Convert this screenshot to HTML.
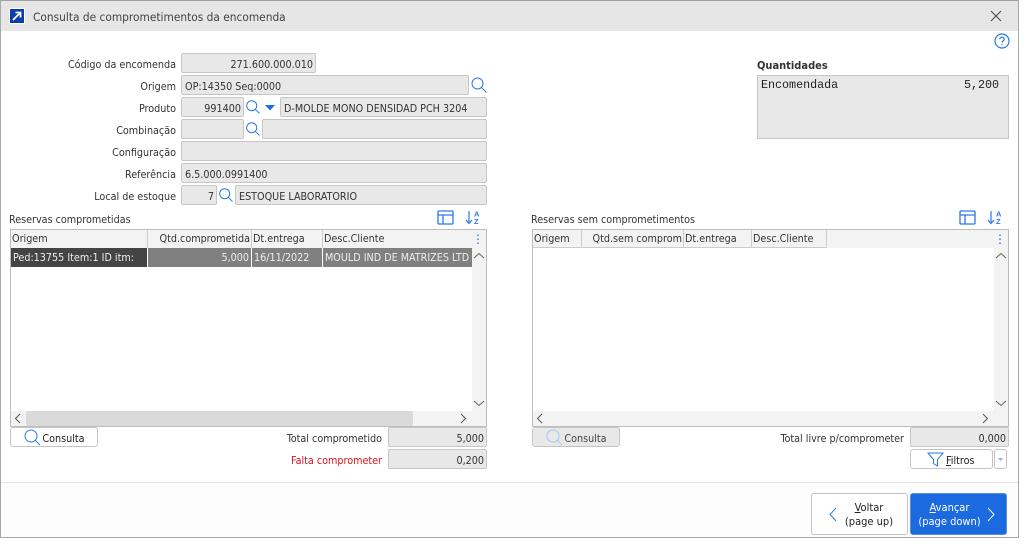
<!DOCTYPE html>
<html><head><meta charset="utf-8">
<style>
html,body{margin:0;padding:0;background:#fff}
body{width:1033px;height:545px;position:relative;overflow:hidden;font-family:"DejaVu Sans Condensed","DejaVu Sans",sans-serif;font-stretch:condensed;font-size:10.7px;color:#333}
.a,.l,.i,.t,.c,.b{position:absolute;box-sizing:border-box;white-space:nowrap}
.l{text-align:right;height:20px;line-height:23px;left:0;width:176px}
.i{background:#e8e8e8;border:1px solid #c6c6c6;border-radius:2px;height:20px;line-height:22px;padding:0 3px;color:#333;overflow:hidden}
.r{text-align:right;padding-right:2px}
.t{line-height:14px}
.c{height:100%;line-height:18px;padding:0 1px;overflow:hidden}
.b{background:#fff;border:1px solid #c4c4c4;border-radius:3px;color:#222;text-align:center}
svg{position:absolute;overflow:visible}
u{text-decoration:underline}
</style></head><body>
<!-- window -->
<div class="a" style="left:0;top:0;width:1019px;height:538px;background:#fdfdfd;border:1px solid #a8a8a8;border-top:1px solid #a0a0a0"></div>
<div class="a" style="left:1px;top:1px;width:1017px;height:30px;background:#e6e6e6"></div>
<div class="a" style="left:1px;top:31px;width:1017px;height:452px;background:#fff"></div>
<div class="a" style="left:1px;top:482px;width:1017px;height:1px;background:#e4e4e4"></div>
<div class="a" style="left:9px;top:8px;width:16px;height:16px;background:#0a3ea8;border:1px solid #fff"></div>
<svg style="left:9px;top:8px" width="16" height="16"><path d="M4 12 L11 5 M6.5 4.5 H11.5 V9.5" fill="none" stroke="#fff" stroke-width="1.8"/></svg>
<div class="t" style="left:33px;top:10px;font-size:11.8px;color:#444">Consulta de comprometimentos da encomenda</div>
<svg style="left:990px;top:10px" width="12" height="12"><path d="M1 1 L11 11 M11 1 L1 11" stroke="#444" stroke-width="1" fill="none"/></svg>
<svg style="left:994px;top:33px" width="16" height="16"><circle cx="8" cy="8" r="7" fill="none" stroke="#2a7ae4" stroke-width="1.2"/><path d="M5.8 6.3 C5.8 3.6 10.2 3.6 10.2 6.3 C10.2 8 8 7.8 8 9.8 M8 11 V12.3" fill="none" stroke="#2a7ae4" stroke-width="1.2"/></svg>

<!-- form -->
<div class="l" style="top:53px">Código da encomenda</div>
<div class="i r" style="left:181px;top:53px;width:135px">271.600.000.010</div>
<div class="l" style="top:75px">Origem</div>
<div class="i" style="left:181px;top:75px;width:288px">OP:14350 Seq:0000</div>
<svg style="left:471px;top:77px" width="16" height="16"><circle cx="6.5" cy="6.5" r="5.5" fill="none" stroke="#2a7ae4" stroke-width="1"/><path d="M10.5 10.5 L15.5 15.5" stroke="#2a7ae4" stroke-width="1"/></svg>
<div class="l" style="top:97px">Produto</div>
<div class="i r" style="left:181px;top:97px;width:63px">991400</div>
<svg style="left:246px;top:100px" width="14" height="14"><circle cx="5.7" cy="5.7" r="5" fill="none" stroke="#2a7ae4" stroke-width="1"/><path d="M9.3 9.3 L13.5 13.5" stroke="#2a7ae4" stroke-width="1"/></svg>
<svg style="left:265px;top:105px" width="10" height="6"><path d="M0 0 H10 L5 5.5 Z" fill="#1c6ee0"/></svg>
<div class="i" style="left:280px;top:97px;width:207px">D-MOLDE MONO DENSIDAD PCH 3204</div>
<div class="l" style="top:119px">Combinação</div>
<div class="i" style="left:181px;top:119px;width:63px"></div>
<svg style="left:246px;top:122px" width="14" height="14"><circle cx="5.7" cy="5.7" r="5" fill="none" stroke="#2a7ae4" stroke-width="1"/><path d="M9.3 9.3 L13.5 13.5" stroke="#2a7ae4" stroke-width="1"/></svg>
<div class="i" style="left:262px;top:119px;width:225px"></div>
<div class="l" style="top:141px">Configuração</div>
<div class="i" style="left:181px;top:141px;width:306px"></div>
<div class="l" style="top:163px">Referência</div>
<div class="i" style="left:181px;top:163px;width:306px">6.5.000.0991400</div>
<div class="l" style="top:185px">Local de estoque</div>
<div class="i r" style="left:181px;top:185px;width:36px">7</div>
<svg style="left:219px;top:188px" width="14" height="14"><circle cx="5.7" cy="5.7" r="5" fill="none" stroke="#2a7ae4" stroke-width="1"/><path d="M9.3 9.3 L13.5 13.5" stroke="#2a7ae4" stroke-width="1"/></svg>
<div class="i" style="left:235px;top:185px;width:252px">ESTOQUE LABORATORIO</div>

<!-- quantidades -->
<div class="t" style="left:757px;top:59px;font-weight:bold;font-size:11px">Quantidades</div>
<div class="a" style="left:757px;top:75px;width:252px;height:64px;background:#e8e8e8;border:1px solid #c6c6c6"></div>
<div class="t" style="left:761px;top:78px;font-family:'Liberation Mono',monospace;font-stretch:normal;font-size:11.7px;color:#222">Encomendada</div>
<div class="t" style="left:964px;top:78px;font-family:'Liberation Mono',monospace;font-stretch:normal;font-size:11.7px;color:#222">5,200</div>

<!-- left grid -->
<div class="t" style="left:9px;top:213px">Reservas comprometidas</div>
<svg style="left:437px;top:210px" width="17" height="15"><rect x="1" y="1" width="15" height="13" rx="1" fill="none" stroke="#2a7ae4" stroke-width="1.3"/><path d="M1 5 H16 M6 5 V14" stroke="#2a7ae4" stroke-width="1.3" fill="none"/></svg>
<svg style="left:465px;top:210px" width="16" height="16"><path d="M4 1 V13 M1 10 L4 13.5 L7 10" fill="none" stroke="#2a7ae4" stroke-width="1.2"/><text x="9" y="6.5" font-size="7.5" font-weight="bold" fill="#2a7ae4" font-family="Liberation Sans">A</text><text x="9" y="14" font-size="7.5" font-weight="bold" fill="#2a7ae4" font-family="Liberation Sans">Z</text></svg>
<div class="a" style="left:10px;top:229px;width:477px;height:198px;background:#fff;border:1px solid #bdbdbd;overflow:hidden">
 <div class="a" style="left:0;top:0;width:475px;height:18px;background:#f3f3f3"></div>
 <div class="c" style="left:0;width:137px;height:18px;border-right:1px solid #ccc">Origem</div>
 <div class="c r" style="left:137px;width:104px;height:18px;border-right:1px solid #ccc;text-align:right">Qtd.comprometida</div>
 <div class="c" style="left:241px;width:71px;height:18px;border-right:1px solid #ccc">Dt.entrega</div>
 <div class="c" style="left:312px;width:149px;height:18px">Desc.Cliente</div>
 <div class="a" style="left:0;top:18px;width:136px;height:19px;line-height:20px;background:#444;color:#eee;padding-left:2px;overflow:hidden">Ped:13755 Item:1 ID itm:</div>
 <div class="a" style="left:137px;top:18px;width:103px;height:19px;line-height:20px;background:#808080;color:#eee;text-align:right;padding-right:2px">5,000</div>
 <div class="a" style="left:241px;top:18px;width:70px;height:19px;line-height:20px;background:#808080;color:#eee;padding-left:2px">16/11/2022</div>
 <div class="a" style="left:312px;top:18px;width:149px;height:19px;line-height:20px;background:#808080;color:#eee;padding-left:2px;overflow:hidden">MOULD IND DE MATRIZES LTD</div>
 <div class="a" style="left:461px;top:18px;width:14px;height:163px;background:#f3f3f3"></div>
 <div class="a" style="left:0;top:181px;width:475px;height:15px;background:#f3f3f3"></div>
 <div class="a" style="left:15px;top:181px;width:387px;height:15px;background:#dadada;border-radius:2px"></div>
</div>
<svg style="left:471px;top:229px" width="16" height="198"><path d="M8 7.5 V9 M8 11.5 V13 M8 15.5 V17" transform="translate(-1,-2)" stroke="#2a7ae4" stroke-width="1.4"/><path d="M3 29 L8 24.5 L13 29 M3 172 L8 176.5 L13 172" fill="none" stroke="#666" stroke-width="1"/></svg>
<svg style="left:14px;top:412px" width="452" height="14"><path d="M6 2 L1.5 6.5 L6 11 M447 2 L451.5 6.5 L447 11" fill="none" stroke="#555" stroke-width="1"/></svg>
<div class="b" style="left:10px;top:427px;width:88px;height:20px;line-height:21px;padding-left:19px;color:#222">Consulta</div>
<svg style="left:24px;top:429px" width="17" height="17"><circle cx="7" cy="7" r="6" fill="none" stroke="#2a7ae4" stroke-width="1"/><path d="M11.3 11.3 L16 16" stroke="#2a7ae4" stroke-width="1"/></svg>
<div class="l" style="left:200px;width:182px;top:427px">Total comprometido</div>
<div class="i r" style="left:388px;top:427px;width:99px">5,000</div>
<div class="l" style="left:200px;width:182px;top:449px;color:#d8141c">Falta comprometer</div>
<div class="i r" style="left:388px;top:449px;width:99px">0,200</div>

<!-- right grid -->
<div class="t" style="left:531px;top:213px">Reservas sem comprometimentos</div>
<svg style="left:959px;top:210px" width="17" height="15"><rect x="1" y="1" width="15" height="13" rx="1" fill="none" stroke="#2a7ae4" stroke-width="1.3"/><path d="M1 5 H16 M6 5 V14" stroke="#2a7ae4" stroke-width="1.3" fill="none"/></svg>
<svg style="left:987px;top:210px" width="16" height="16"><path d="M4 1 V13 M1 10 L4 13.5 L7 10" fill="none" stroke="#2a7ae4" stroke-width="1.2"/><text x="9" y="6.5" font-size="7.5" font-weight="bold" fill="#2a7ae4" font-family="Liberation Sans">A</text><text x="9" y="14" font-size="7.5" font-weight="bold" fill="#2a7ae4" font-family="Liberation Sans">Z</text></svg>
<div class="a" style="left:532px;top:229px;width:477px;height:198px;background:#fff;border:1px solid #bdbdbd;overflow:hidden">
 <div class="a" style="left:0;top:0;width:475px;height:18px;background:#f3f3f3"></div>
 <div class="c" style="left:0;width:49px;height:18px;border-right:1px solid #ccc;border-bottom:1px solid #ccc">Origem</div>
 <div class="c" style="left:49px;width:102px;height:18px;border-right:1px solid #ccc;border-bottom:1px solid #ccc;text-align:right">Qtd.sem comprom</div>
 <div class="c" style="left:151px;width:68px;height:18px;border-right:1px solid #ccc;border-bottom:1px solid #ccc">Dt.entrega</div>
 <div class="c" style="left:219px;width:75px;height:18px;border-right:1px solid #ccc;border-bottom:1px solid #ccc">Desc.Cliente</div>
 <div class="a" style="left:461px;top:18px;width:14px;height:163px;background:#f3f3f3"></div>
 <div class="a" style="left:0;top:181px;width:475px;height:15px;background:#f3f3f3"></div>
</div>
<svg style="left:993px;top:229px" width="16" height="198"><path d="M8 7.5 V9 M8 11.5 V13 M8 15.5 V17" transform="translate(-1,-2)" stroke="#2a7ae4" stroke-width="1.4"/><path d="M3 29 L8 24.5 L13 29 M3 172 L8 176.5 L13 172" fill="none" stroke="#666" stroke-width="1"/></svg>
<svg style="left:536px;top:412px" width="452" height="14"><path d="M6 2 L1.5 6.5 L6 11 M447 2 L451.5 6.5 L447 11" fill="none" stroke="#555" stroke-width="1"/></svg>
<div class="b" style="left:532px;top:427px;width:88px;height:20px;line-height:21px;padding-left:19px;background:#e8e8e8;color:#444">Consulta</div>
<svg style="left:546px;top:429px" width="17" height="17"><circle cx="7" cy="7" r="6" fill="none" stroke="#a4c6f2" stroke-width="1"/><path d="M11.3 11.3 L16 16" stroke="#a4c6f2" stroke-width="1"/></svg>
<div class="l" style="left:700px;width:204px;top:427px">Total livre p/comprometer</div>
<div class="i r" style="left:910px;top:427px;width:99px">0,000</div>
<div class="b" style="left:910px;top:449px;width:83px;height:20px;line-height:21px;padding-left:35px;text-align:left"><u>F</u>iltros</div>
<svg style="left:927px;top:452px" width="17" height="15"><path d="M1 1 H16 L10.5 7.5 V14 L6.5 11.5 V7.5 Z" fill="none" stroke="#2a7ae4" stroke-width="1"/></svg>
<div class="b" style="left:994px;top:449px;width:13px;height:20px"></div>
<svg style="left:998px;top:458px" width="5" height="3"><path d="M0 0 H5 L2.5 3 Z" fill="#8fb4e6"/></svg>

<!-- nav -->
<div class="b" style="left:811px;top:493px;width:97px;height:42px;line-height:14px;padding:7px 0 0 19px;color:#222;font-size:11px"><u>V</u>oltar<br>(page up)</div>
<svg style="left:829px;top:507px" width="8" height="15"><path d="M7 1 L1 7.5 L7 14" fill="none" stroke="#2a7ae4" stroke-width="1"/></svg>
<div class="b" style="left:910px;top:493px;width:97px;height:42px;line-height:14px;padding:7px 18px 0 0;background:#1b6ae0;border-color:#5a8fd8;color:#fff;font-size:11px"><u>A</u>vançar<br>(page down)</div>
<svg style="left:987px;top:507px" width="8" height="15"><path d="M1 1 L7 7.5 L1 14" fill="none" stroke="#fff" stroke-width="1"/></svg>
</body></html>
